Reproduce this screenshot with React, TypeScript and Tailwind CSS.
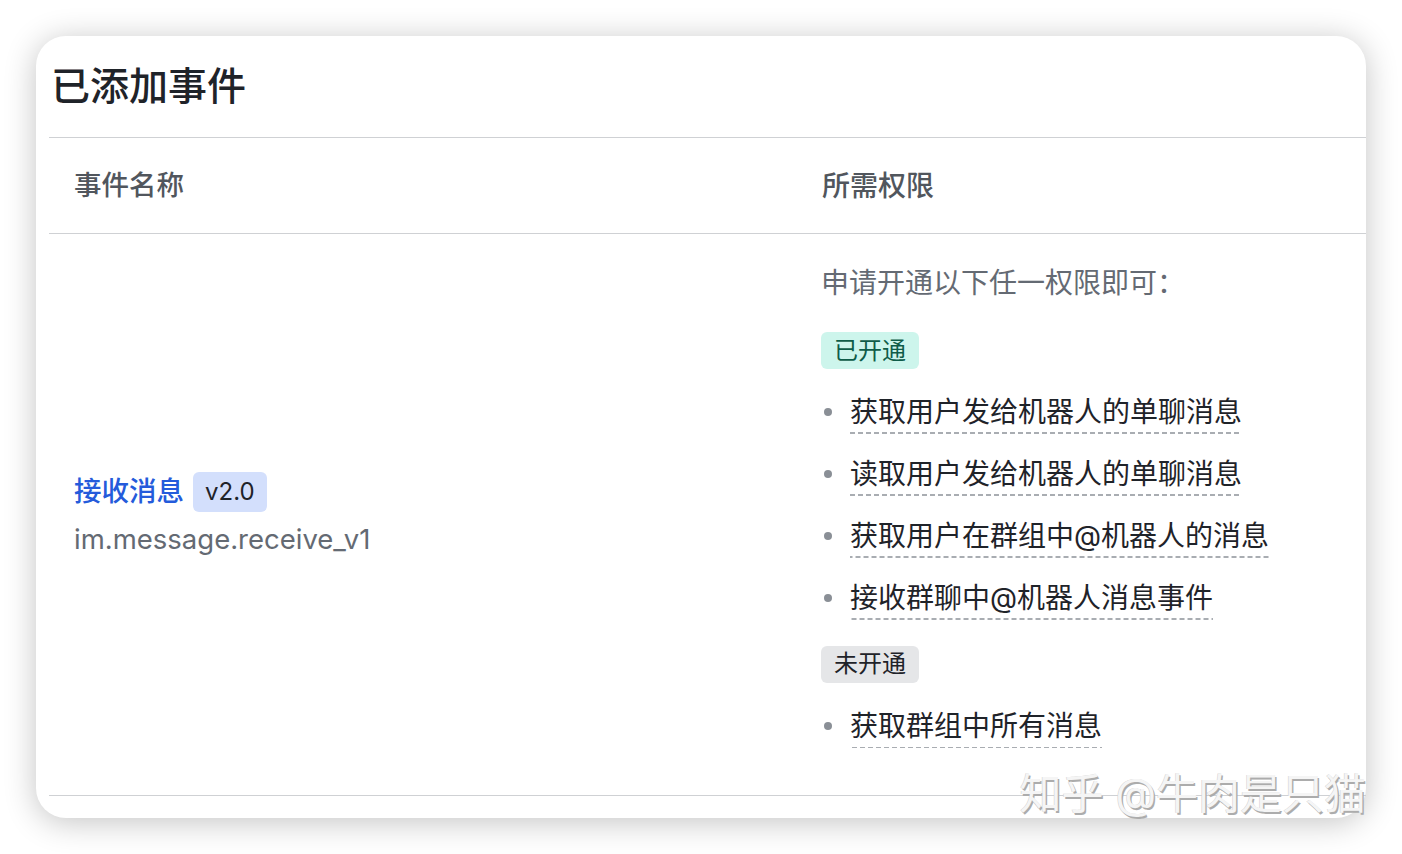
import React from "react";

const dashed =
  "bg-[linear-gradient(to_right,#a9adb2_65%,transparent_65%)] bg-[length:8px_1.5px] bg-repeat-x bg-bottom";

function PermItem({ text }: { text: string }) {
  return (
    <div className="flex items-center h-[42px]">
      <span className="w-[8px] h-[8px] rounded-full bg-[#8a8f96] ml-[3px] mr-[18px] shrink-0 -mt-[2px]" />
      <span className={`h-[42px] leading-[40px] pb-[2px] text-[#1f2329] ${dashed}`}>{text}</span>
    </div>
  );
}

export default function App() {
  return (
    <div className="min-h-[854px] bg-white p-[36px] font-['Inter','Noto_Sans_CJK_SC',sans-serif] text-[28px]">
      <div className="relative h-[782px] w-[1330px] rounded-[30px] bg-white shadow-[0_4px_32px_rgba(0,0,0,0.24)]">
        <div className="h-[101px] flex items-center pl-[15px] text-[39px] font-medium text-[#1f2329]">
          已添加事件
        </div>
        <div className="ml-[13px] border-t border-[#cfd1d4]">
          <div className="grid grid-cols-[748px_1fr] h-[96px] border-b border-[#cfd1d4] text-[#51565d] font-medium">
            <div className="flex items-center pl-[25px] text-[27.5px]">事件名称</div>
            <div className="flex items-center pl-[25px]">所需权限</div>
          </div>
          <div className="grid grid-cols-[748px_1fr] h-[562px] border-b border-[#cfd1d4]">
            <div className="flex flex-col justify-center pl-[25px] pt-[2px] text-[27.5px]">
              <div className="flex items-center h-[40px]">
                <span className="text-[#245bdb] font-medium">接收消息</span>
                <span className="ml-[9px] h-[40px] px-[12px] rounded-[6px] bg-[#d3dffc] text-[#1f2329] text-[24px] leading-[40px]">
                  v2.0
                </span>
              </div>
              <div className="mt-[7px] h-[40px] leading-[40px] text-[#646a73]">im.message.receive_v1</div>
            </div>
            <div className="pl-[24px] pt-[29px]">
              <div className="h-[40px] leading-[40px] text-[#646a73]">申请开通以下任一权限即可：</div>
              <div className="mt-[29px] inline-flex items-center h-[37px] px-[13px] rounded-[6px] bg-[#cdf5ec] text-[#0f5c48] text-[24px]">
                已开通
              </div>
              <div className="mt-[22px] flex flex-col gap-[20px]">
                <PermItem text="获取用户发给机器人的单聊消息" />
                <PermItem text="读取用户发给机器人的单聊消息" />
                <PermItem text="获取用户在群组中@机器人的消息" />
                <PermItem text="接收群聊中@机器人消息事件" />
              </div>
              <div className="mt-[26px] inline-flex items-center h-[37px] px-[13px] rounded-[6px] bg-[#e5e6e8] text-[#1f2329] text-[24px]">
                未开通
              </div>
              <div className="mt-[23px] flex flex-col">
                <PermItem text="获取群组中所有消息" />
              </div>
            </div>
          </div>
        </div>
        <div className="absolute right-0 bottom-[1px] text-[42px] leading-[46px] text-[#f5f5f5] [text-shadow:1.5px_1.5px_0_#acacac,-0.5px_-0.5px_0_#cfcfcf] whitespace-nowrap">
          知乎 @牛肉是只猫
        </div>
      </div>
    </div>
  );
}
